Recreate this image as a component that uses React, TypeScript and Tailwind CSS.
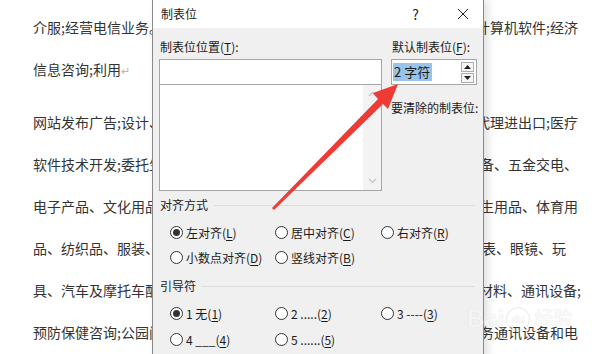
const docLines: [string, string][] = [
  ['介服;经营电信业务。', '计算机软件;经济'],
  ['信息咨询;利用', ''],
  ['网站发布广告;设计、', '代理进出口;医疗'],
  ['软件技术开发;委托生', '设备、五金交电、'],
  ['电子产品、文化用品', '卫生用品、体育用'],
  ['品、纺织品、服装、', '钟表、眼镜、玩'],
  ['具、汽车及摩托车配', '建材料、通讯设备;'],
  ['预防保健咨询;公园门', '服务通讯设备和电'],
];

function Mn({ pre, k, post = ')' }: { pre: string; k: string; post?: string }) {
  return (
    <span>
      {pre}(<span className="underline underline-offset-2">{k}</span>{post}
    </span>
  );
}

function Radio({ on = false, children }: { on?: boolean; children: React.ReactNode }) {
  return (
    <div className="flex items-center gap-[3px] h-[25px]">
      <span className="w-[13px] h-[13px] rounded-full border border-[#333] bg-white flex items-center justify-center">
        {on && <span className="w-[7px] h-[7px] rounded-full bg-[#333]" />}
      </span>
      <span className="whitespace-nowrap">{children}</span>
    </div>
  );
}

function Chevron({ up }: { up?: boolean }) {
  return (
    <svg width="9" height="6" viewBox="0 0 9 6">
      <path
        d={up ? 'M1 5 L4.5 1.5 L8 5' : 'M1 1 L4.5 4.5 L8 1'}
        fill="none"
        stroke="#c2c2c2"
        strokeWidth="1.2"
      />
    </svg>
  );
}

function Section({ title }: { title: string }) {
  return (
    <div className="flex items-center gap-[6px] h-[16px] pl-[7px] pr-[8px]">
      <span className="text-[12px] text-[#222]">{title}</span>
      <div className="flex-1 h-px bg-[#dcdcdc]" />
    </div>
  );
}

export default function App() {
  return (
    <div className="relative w-[609px] h-[354px] overflow-hidden bg-white font-['Noto_Sans_CJK_SC',sans-serif]">
      {/* document text */}
      <div className="flex flex-col pl-[33px] pr-[31px] pt-[17px] gap-[22px] text-[14px] leading-[20px] text-[#333]">
        {docLines.map(([l, r], i) => (
          <div key={i} className={`flex justify-between whitespace-nowrap ${i === 2 ? 'mt-[10px]' : ''}`}>
            <span>
              {l}
              {i === 1 && <span className="text-[#b5b5b5] text-[11px]">↵</span>}
            </span>
            <span className={i === 5 ? 'pr-[12px]' : i === 6 ? '-mr-[3px]' : ''}>{r}</span>
          </div>
        ))}
      </div>

      {/* tab dialog */}
      <div className="absolute left-[152px] top-0 w-[332px] h-[360px] bg-[#f0f0f0] border-l border-r border-[#8a8a8a] shadow-[4px_0_8px_rgba(0,0,0,0.12)] text-[12px] leading-[16px] text-[#1a1a1a]">
        <div className="h-[28px] bg-white flex items-center pl-[8px] pr-[14px]">
          <span className="flex-1">制表位</span>
          <span className="text-[14px] mr-[38px] text-[#222]">?</span>
          <svg width="12" height="12" viewBox="0 0 12 12">
            <path d="M1 1 L11 11 M11 1 L1 11" stroke="#222" strokeWidth="1" />
          </svg>
        </div>

        <div className="flex pl-[6px] pt-[11px] gap-[9px]">
          <div className="flex flex-col w-[223px]">
            <div className="pl-[1px] mb-[4px]">
              <Mn pre="制表位位置" k="T" post="):" />
            </div>
            <div className="h-[26px] bg-white border border-[#a5a5a5]" />
            <div className="h-[106px] bg-white border border-t-0 border-[#a5a5a5] flex justify-end">
              <div className="w-[18px] bg-[#f3f3f3] flex flex-col items-center justify-between py-[6px]">
                <Chevron up />
                <Chevron />
              </div>
            </div>
          </div>
          <div className="flex flex-col">
            <div className="pl-[1px] mb-[4px]">
              <Mn pre="默认制表位" k="F" post="):" />
            </div>
            <div className="w-[86px] h-[26px] bg-white border border-[#a5a5a5] flex items-center pl-[1px] pr-[2px]">
              <span className="bg-[#99c4ea] text-[13px] leading-[18px] px-[1px] pr-[2px]">2 字符</span>
              <div className="ml-auto flex flex-col gap-px">
                <div className="w-[13px] h-[10px] border border-[#adadad] bg-[#f5f5f5] flex items-center justify-center">
                  <svg width="7" height="4" viewBox="0 0 7 4"><path d="M3.5 0 L7 4 L0 4 Z" fill="#222" /></svg>
                </div>
                <div className="w-[13px] h-[10px] border border-[#adadad] bg-[#f5f5f5] flex items-center justify-center">
                  <svg width="7" height="4" viewBox="0 0 7 4"><path d="M0 0 L7 0 L3.5 4 Z" fill="#222" /></svg>
                </div>
              </div>
            </div>
            <div className="mt-[15px] whitespace-nowrap">要清除的制表位:</div>
          </div>
        </div>

        <div className="mt-[6px]">
          <Section title="对齐方式" />
        </div>
        <div className="grid grid-cols-[105px_106px_100px] pl-[17px] mt-[7px]">
          <Radio on><Mn pre="左对齐" k="L" /></Radio>
          <Radio><Mn pre="居中对齐" k="C" /></Radio>
          <Radio><Mn pre="右对齐" k="R" /></Radio>
          <Radio><Mn pre="小数点对齐" k="D" /></Radio>
          <Radio><Mn pre="竖线对齐" k="B" /></Radio>
        </div>

        <div className="mt-[8px]">
          <Section title="引导符" />
        </div>
        <div className="grid grid-cols-[105px_106px_100px] pl-[17px] mt-[7px] gap-y-[1px]">
          <Radio on><Mn pre="1 无" k="1" /></Radio>
          <Radio><Mn pre="2 ....." k="2" /></Radio>
          <Radio><Mn pre="3 ----" k="3" /></Radio>
          <Radio><Mn pre="4 ___" k="4" /></Radio>
          <Radio><Mn pre="5 ......" k="5" /></Radio>
        </div>
      </div>

      {/* red arrow annotation */}
      <svg className="absolute left-0 top-0 pointer-events-none" width="609" height="354">
        <polygon
          points="398,84 388,109 383,104 274,210 272,208 378,99 373,93"
          fill="#ee3b36"
        />
      </svg>

      {/* watermark */}
      <div className="absolute left-[467px] top-[306px] flex items-center gap-[2px] text-[#f7f7f7] opacity-60 pointer-events-none [text-shadow:0_0_1px_#c8c8c8] font-['Liberation_Sans','Noto_Sans_CJK_SC',sans-serif]">
        <span className="text-[24px] leading-[26px] font-bold">Bai</span>
        <span className="w-[24px] h-[24px] rounded-full border border-[#d8d8d8] text-[11px] leading-[22px] text-center">du</span>
        <span className="text-[19px] leading-[24px] ml-[2px]">经验</span>
      </div>
    </div>
  );
}
